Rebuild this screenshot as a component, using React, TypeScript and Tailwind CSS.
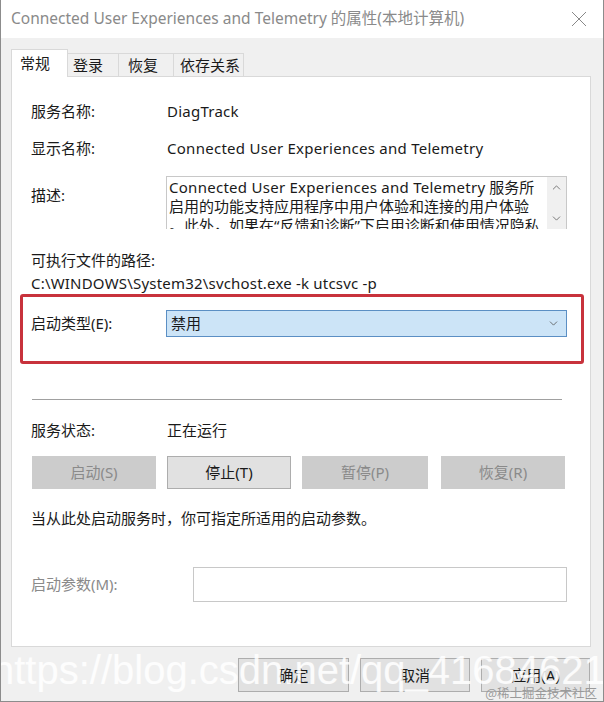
import { ChevronDown, ChevronUp } from 'lucide-react'

const font = { fontFamily: '"Noto Sans", "Noto Sans CJK SC", sans-serif' }

function Btn({ label, disabled, w }: { label: string; disabled?: boolean; w: string }) {
  return (
    <div
      className={`${w} h-[33px] flex items-center justify-center text-[15px] border ${
        disabled ? 'bg-[#cccccc] border-[#cccccc] text-[#8a8a8a]' : 'bg-[#e1e1e1] border-[#adadad] text-[#1a1a1a]'
      }`}
    >
      {label}
    </div>
  )
}

export default function App() {
  return (
    <div className="relative w-[604px] h-[702px] overflow-hidden bg-[#f0f0f0] border-x border-b border-[#8c8c8c] text-[#1a1a1a]" style={font}>
      {/* title bar */}
      <div className="h-[38px] bg-white flex items-center justify-between pl-[10px] pr-[14px]">
        <span className="text-[15.5px] text-[#8a8a8a]">Connected User Experiences and Telemetry 的属性(本地计算机)</span>
        <svg width="16" height="16" viewBox="0 0 16 16" className="mr-[2px]">
          <path d="M1 1 L15 15 M15 1 L1 15" stroke="#888" strokeWidth="1" />
        </svg>
      </div>

      {/* tabs */}
      <div className="flex items-end pl-[10px] mt-[10px] h-[28px] text-[15px]">
        <div className="w-[57px] h-[28px] pl-[8px] bg-white border border-b-0 border-[#d9d9d9] flex items-center relative z-10 -mb-px">常规</div>
        <div className="w-[51px] h-[23px] pl-[5px] border-t border-r border-[#d9d9d9] flex items-center">登录</div>
        <div className="w-[55px] h-[23px] pl-[9px] border-t border-r border-[#d9d9d9] flex items-center">恢复</div>
        <div className="w-[70px] h-[23px] pl-[6px] border-t border-r border-[#d9d9d9] flex items-center">依存关系</div>
      </div>

      {/* panel */}
      <div className="mx-[10px] w-[580px] h-[571px] bg-white border border-[#d9d9d9] text-[15px] relative">
        <div className="px-[19px] pt-[22px]">
          <div className="flex items-center h-[24px]">
            <span className="w-[136px]">服务名称:</span>
            <span className="tracking-[0.25px]">DiagTrack</span>
          </div>
          <div className="flex items-center h-[24px] mt-[13px]">
            <span className="w-[136px]">显示名称:</span>
            <span className="tracking-[0.27px]">Connected User Experiences and Telemetry</span>
          </div>
          <div className="flex mt-[16px]">
            <span className="w-[135px] pt-[8px]">描述:</span>
            <div className="w-[401px] h-[53px] border border-[#c8c8c8] border-b-0 flex overflow-hidden">
              <div className="flex-1 px-[2px] leading-[19px] pt-[1px] overflow-hidden whitespace-nowrap">
                <div>
                  <span className="tracking-[0.27px]">Connected User Experiences and Telemetry</span> 服务所
                </div>
                <div>启用的功能支持应用程序中用户体验和连接的用户体验</div>
                <div>。此外，如果在“反馈和诊断”下启用诊断和使用情况隐私</div>
              </div>
              <div className="w-[19px] bg-[#f0f0f0] flex flex-col items-center justify-between py-[4px] text-[#606060]">
                <ChevronUp size={13} strokeWidth={1.5} />
                <ChevronDown size={13} strokeWidth={1.5} />
              </div>
            </div>
          </div>
          <div className="mt-[19px] h-[24px] flex items-center">可执行文件的路径:</div>
          <div className="h-[22px] flex items-center tracking-[0.2px]">C:\WINDOWS\System32\svchost.exe -k utcsvc -p</div>
        </div>

        {/* startup type highlighted */}
        <div className="ml-[8px] mr-[6px] h-[70px] border-[3px] border-[#c8323c] rounded-[3px] flex items-start pt-[13px] pl-[8px]">
          <span className="w-[135px] h-[27px] flex items-center">启动类型(E):</span>
          <div className="w-[401px] h-[27px] bg-[#cce4f7] border border-[#5b8fc4] flex items-center justify-between pl-[4px] pr-[6px]">
            <span>禁用</span>
            <ChevronDown size={13} strokeWidth={1.5} className="text-[#555]" />
          </div>
        </div>

        <div className="mx-[20px] mt-[35px] h-px bg-[#a0a0a0] w-[530px]" />

        <div className="px-[19px]">
          <div className="flex items-center h-[24px] mt-[18px]">
            <span className="w-[136px]">服务状态:</span>
            <span>正在运行</span>
          </div>
          <div className="flex mt-[14px] pl-[1px]">
            <Btn label="启动(S)" disabled w="w-[124px]" />
            <div className="w-[11px]" />
            <Btn label="停止(T)" w="w-[124px]" />
            <div className="w-[11px]" />
            <Btn label="暂停(P)" disabled w="w-[126px]" />
            <div className="w-[13px]" />
            <Btn label="恢复(R)" disabled w="w-[124px]" />
          </div>
          <div className="mt-[17px] h-[24px] flex items-center">当从此处启动服务时，你可指定所适用的启动参数。</div>
          <div className="flex items-center mt-[37px]">
            <span className="w-[162px] text-[#8a8a8a]">启动参数(M):</span>
            <div className="w-[374px] h-[35px] border border-[#c8c8c8] bg-white" />
          </div>
        </div>
      </div>

      {/* dialog buttons */}
      <div className="flex justify-end gap-[11px] pr-[13px] mt-[11px] text-[15px]">
        <div className="w-[111px] h-[34px] bg-[#e1e1e1] border border-[#adadad] flex items-center justify-center">确定</div>
        <div className="w-[110px] h-[34px] bg-[#e1e1e1] border border-[#adadad] flex items-center justify-center">取消</div>
        <div className="w-[109px] h-[34px] bg-[#e1e1e1] border border-[#adadad] flex items-center justify-center">应用(A)</div>
      </div>

      {/* watermarks */}
      <div
        className="absolute left-[-9px] top-[650px] text-[40px] text-white/85 whitespace-nowrap leading-none"
        style={{ fontFamily: '"Liberation Sans", Arial, sans-serif' }}
      >
        https://blog.csdn.net/qq_41684621
      </div>
      <div className="absolute right-[6px] bottom-[2px] text-[12.5px] text-[#9a9a9a] leading-none" style={{ fontFamily: '"Noto Sans CJK SC", sans-serif' }}>
        @稀土掘金技术社区
      </div>
    </div>
  )
}
